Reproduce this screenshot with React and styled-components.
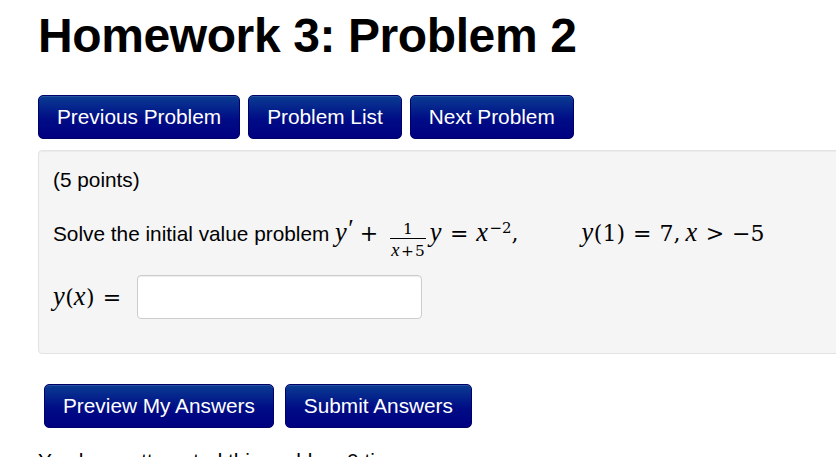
import React from "react";
import styled, { createGlobalStyle } from "styled-components";

const Global = createGlobalStyle`
  html, body { margin: 0; padding: 0; background: #ffffff; }
  body {
    font-family: "Liberation Sans", Arial, sans-serif;
    color: #000;
    overflow: hidden;
  }
`;

const Page = styled.div`
  width: 836px;
  height: 457px;
  overflow: hidden;
  padding-left: 38px;
  box-sizing: border-box;
`;

const Title = styled.h1`
  margin: 0;
  padding-top: 8px;
  font-size: 48px;
  line-height: 56px;
  font-weight: 700;
  letter-spacing: -0.4px;
`;

const ButtonRow = styled.div`
  display: flex;
  gap: ${(p) => p.$gap}px;
  margin-top: ${(p) => p.$top}px;
  margin-left: ${(p) => p.$left || 0}px;
`;

const NavButton = styled.button`
  font-family: "Liberation Sans", Arial, sans-serif;
  font-size: 20.8px;
  line-height: 24px;
  color: #ffffff;
  padding: 9px 18px;
  border: 1px solid #00006a;
  border-radius: 5px;
  background: linear-gradient(to bottom, #0a3c92 0%, #000c86 55%, #000080 100%);
  box-shadow: inset 0 1px 0 rgba(255, 255, 255, 0.12);
  cursor: pointer;
  white-space: nowrap;
`;

const Well = styled.div`
  margin-top: 11px;
  width: 900px;
  box-sizing: border-box;
  background: #f5f5f5;
  border: 1px solid #e3e3e3;
  border-radius: 4px;
  padding: 17px 14px 34px;
  box-shadow: inset 0 1px 1px rgba(0, 0, 0, 0.04);
`;

const Para = styled.p`
  margin: ${(p) => p.$mt || 0}px 0 0;
  font-size: 20.8px;
  line-height: 24px;
  white-space: nowrap;
`;

const MathText = styled.span`
  font-family: "DejaVu Serif", "Liberation Serif", serif;
  font-size: 22px;
  line-height: 1;
  white-space: nowrap;
  margin-left: ${(p) => p.$ml || 0}px;
`;

const V = styled.span`
  font-family: "Liberation Serif", "Times New Roman", serif;
  font-style: italic;
  font-size: 1.2em;
  margin-right: ${(p) => p.$mr || 0.5}px;
`;

const Op = styled.span`
  margin: 0 ${(p) => (p.$rel ? 8 : 6)}px;
`;

const Punct = styled.span`
  margin-right: ${(p) => p.$mr || 5}px;
`;

const Prime = styled.span`
  font-family: "Liberation Serif", "Times New Roman", serif;
  font-size: 1.15em;
  vertical-align: 0.15em;
  margin-left: 1px;
`;

const Sup = styled.span`
  font-size: 0.68em;
  vertical-align: 0.55em;
  margin-left: 1px;
`;

const Frac = styled.span`
  display: inline-flex;
  flex-direction: column;
  align-items: stretch;
  text-align: center;
  font-size: 0.7em;
  vertical-align: 7px;
  margin: 0 4px 0 6px;
`;

const FracNum = styled.span`
  display: block;
  line-height: 1;
  padding: 0 1px 1px;
  border-bottom: 1px solid #000;
`;

const FracDen = styled.span`
  display: block;
  line-height: 1;
  padding: 2px 1px 0;
`;

const SmallOp = styled.span`
  margin: 0 1px;
`;

const AnswerRow = styled.div`
  display: flex;
  align-items: center;
  gap: 8px;
  margin-top: 15px;
`;

const AnswerInput = styled.input`
  width: 285px;
  height: 44px;
  box-sizing: border-box;
  border: 1px solid #cccccc;
  border-radius: 4px;
  background: #ffffff;
  box-shadow: inset 0 1px 1px rgba(0, 0, 0, 0.075);
  font-size: 20.8px;
  padding: 4px 8px;
  outline: none;
`;

const Footer = styled.p`
  margin: 21px 0 0;
  font-size: 20.8px;
  line-height: 24px;
  white-space: nowrap;
`;

export default function App() {
  return (
    <>
      <Global />
      <Page>
        <Title>Homework 3: Problem 2</Title>
        <ButtonRow $gap={8} $top={31}>
          <NavButton>Previous Problem</NavButton>
          <NavButton>Problem List</NavButton>
          <NavButton>Next Problem</NavButton>
        </ButtonRow>
        <Well>
          <Para>(5 points)</Para>
          <Para $mt={24}>
            Solve the initial value problem{" "}
            <MathText>
              <V>y</V>
              <Prime>′</Prime>
              <Op>+</Op>
              <Frac>
                <FracNum>1</FracNum>
                <FracDen>
                  <V>x</V>
                  <SmallOp>+</SmallOp>5
                </FracDen>
              </Frac>
              <V>y</V>
              <Op $rel>=</Op>
              <V>x</V>
              <Sup>−2</Sup>
              <Punct>,</Punct>
            </MathText>
            <MathText $ml={58}>
              <V>y</V>(1)
              <Op $rel>=</Op>7<Punct>,</Punct>
              <V>x</V>
              <Op $rel>&gt;</Op>−5
            </MathText>
          </Para>
          <AnswerRow>
            <MathText>
              <V>y</V>(<V>x</V>)<Op $rel>=</Op>
            </MathText>
            <AnswerInput type="text" aria-label="answer" />
          </AnswerRow>
        </Well>
        <ButtonRow $gap={11} $top={30} $left={6}>
          <NavButton>Preview My Answers</NavButton>
          <NavButton>Submit Answers</NavButton>
        </ButtonRow>
        <Footer>You have attempted this problem 0 times.</Footer>
      </Page>
    </>
  );
}
